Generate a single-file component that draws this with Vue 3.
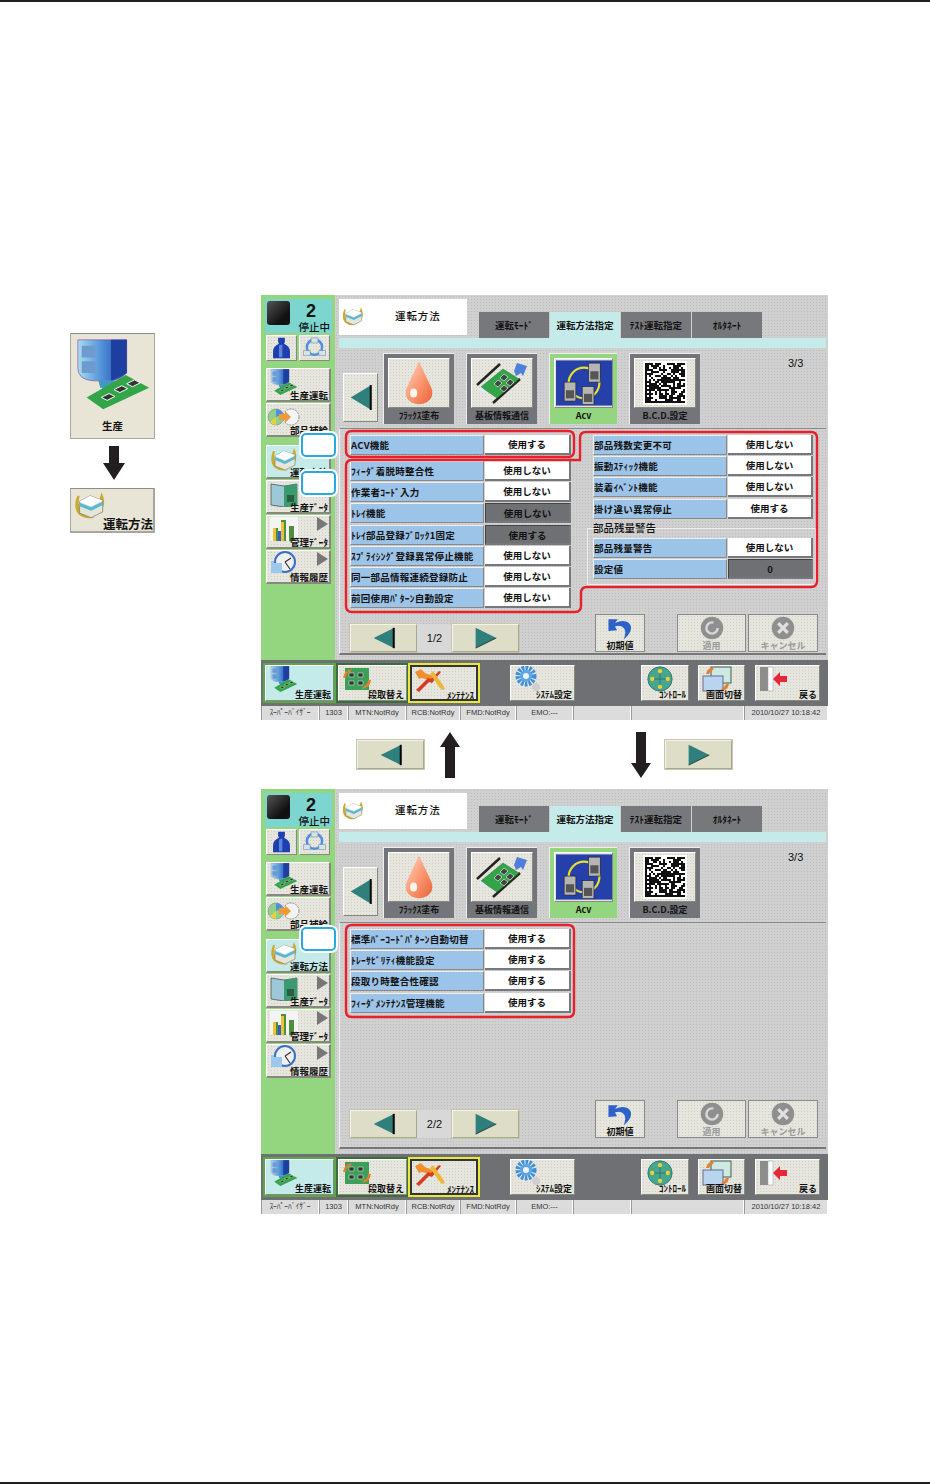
<template>
  <div class="page">
    <svg class="defs" width="0" height="0">
      <defs>
        <linearGradient id="gTower" x1="0" x2="1" y1="0" y2="0">
          <stop offset="0" stop-color="#a8def0" /><stop offset=".5" stop-color="#4f8fd8" /><stop offset="1" stop-color="#1c3fa0" />
        </linearGradient>
        <linearGradient id="gDrop" x1="0" x2="1" y1="0" y2="1">
          <stop offset="0" stop-color="#ffd8c4" /><stop offset=".5" stop-color="#fb9a74" /><stop offset="1" stop-color="#ea6238" />
        </linearGradient>
      </defs>
      <symbol id="machine" viewBox="0 0 84 72">
        <path d="M6 1h50v34q-6 6-14 8H22Q6 42 6 30z" fill="url(#gTower)" stroke="#8a3aa0" stroke-width=".6" />
        <path d="M10 7h14v12H10zM10 23h14v12H10z" fill="#6f9ad0" />
        <path d="M40 1h16v34l-16 8z" fill="#1c3fa0" />
        <path d="M27 43h18l-2 7h-3v8l-3 4h-3l-3-4v-8h-2z" fill="#3d9bc0" />
        <path d="M15 60L55 37l24 13-47 22z" fill="#32a548" />
        <path d="M30 60l8-4 6 3-8 4zM43 52l8-4 6 3-8 4zM56 46l8-4 6 3-8 4z" fill="#333" stroke="#fff" />
      </symbol>
      <symbol id="tray" viewBox="0 0 30 26">
        <path d="M4 5Q0 15 5 21q6 5 14 3-9-1-12-6T6 5zM25 2q4 8 1 14-2 3-6 5 4-7 3-12z" fill="#cfa92b" />
        <path d="M6 10l9-5 11 4v10l-10 5-10-4z" fill="#e6e6d8" stroke="#77776c" stroke-width=".6" />
        <path d="M6 10l9-5 11 4-10 5z" fill="#fff" />
        <path d="M6 11l10 4 10-5v3l-10 5-10-4z" fill="#58b7d5" />
      </symbol>
      <symbol id="person" viewBox="0 0 30 26">
        <path d="M11 1h8v5l-1 2q7 3 7 9v8H5v-8q0-6 7-9l-1-2z" fill="#1f3fb0" />
        <path d="M12 10l4-1v15h-4z" fill="#5a86da" />
      </symbol>
      <symbol id="ring" viewBox="0 0 30 26">
        <circle cx="15" cy="12" r="9" fill="none" stroke="#4f8fe0" stroke-width="3" />
        <path d="M11 1h8v6h-8zM2 16h8v6H2zM20 16h8v6h-8z" fill="#d5e3ec" stroke="#6c7f8c" stroke-width=".6" />
      </symbol>
      <symbol id="parts" viewBox="0 0 34 20">
        <circle cx="9" cy="10" r="8" fill="#8fd08a" stroke="#888" stroke-width=".6" />
        <path d="M9 2a8 8 0 0 1 7 5L9 10z" fill="#4f8fe0" />
        <path d="M9 10l-6 5a8 8 0 0 0 6 3z" fill="#e8d23a" />
        <circle cx="24" cy="10" r="8" fill="#f4f4f4" stroke="#777" stroke-width=".8" stroke-dasharray="2 1" />
        <path d="M12 7h6V4l6 6-6 6v-3h-6z" fill="#ef9a3a" />
      </symbol>
      <symbol id="board" viewBox="0 0 56 44">
        <path d="M3 24L26 3" stroke="#222" stroke-width="2.4" />
        <path d="M19 42l27-24" stroke="#222" stroke-width="2.4" />
        <path d="M7 26l22-18 16 10-22 19z" fill="#32a548" stroke="#1f6f30" stroke-width=".5" />
        <path d="M20 23l4-4 4 3-4 4zM26 17l4-4 4 3-4 4zM26 28l4-4 4 3-4 4zM32 22l4-4 4 3-4 4z" fill="#444" stroke="#fff" stroke-width=".6" />
        <path d="M40 10l3-8 10 3-4 10-2-3-5 3z" fill="#4f7fd8" />
        <path d="M7 26l-3 3 6 3 3-1z" fill="#dfe8f5" />
      </symbol>
      <symbol id="swap" viewBox="0 0 34 26">
        <rect x="5" y="2" width="24" height="22" fill="#3da058" />
        <path d="M9 7h5v4H9zM18 7h5v4h-5zM9 15h5v4H9zM18 15h5v4h-5z" fill="#333" stroke="#ddd" stroke-width=".6" />
        <path d="M3 12q1-8 9-9l-2 3q-4 1-4 6zM31 14q-1 8-9 9l2-3q4-1 4-6z" fill="#e57f2e" />
      </symbol>
      <symbol id="tools" viewBox="0 0 34 26">
        <path d="M2 5l6-3 4 4 10 4-3 4-10-3-3 1z" fill="#ef8f2e" />
        <path d="M3 23l3 2 10-10 3 1 9-11-2-1-8 8-3-1-10 10z" fill="#d83a26" />
        <path d="M20 4l10 14 2 4-3 1-3-3-9-13z" fill="#ebb93a" />
      </symbol>
      <symbol id="gear" viewBox="0 0 30 26">
        <circle cx="12" cy="10" r="8" fill="none" stroke="#3f8fdc" stroke-width="5" stroke-dasharray="2.5 1.2" />
        <circle cx="12" cy="10" r="6" fill="#5aa5e6" />
        <circle cx="12" cy="10" r="3" fill="#f3f3f3" />
        <circle cx="22" cy="21" r="4" fill="#cfcfcf" />
      </symbol>
      <symbol id="control" viewBox="0 0 30 30">
        <circle cx="15" cy="15" r="14" fill="#48a68e" stroke="#2b6f72" />
        <path d="M15 3v24M3 15h24" stroke="#2b6f72" />
        <circle cx="15" cy="6" r="2.5" fill="#e8d23a" /><circle cx="15" cy="24" r="2.5" fill="#e8d23a" />
        <circle cx="6" cy="15" r="2.5" fill="#e8d23a" /><circle cx="24" cy="15" r="2.5" fill="#e8d23a" />
      </symbol>
      <symbol id="screens" viewBox="0 0 30 26">
        <rect x="9" y="1" width="20" height="16" fill="#cfe8e2" stroke="#3b5f4f" />
        <rect x="1" y="10" width="20" height="15" fill="#b8d4ee" stroke="#5f6f8f" />
        <path d="M4 8q1-6 8-7l-1 3q-3 1-4 4zM27 18q-1 6-8 7l1-3q3-1 4-4z" fill="#e57f2e" />
      </symbol>
      <symbol id="door" viewBox="0 0 30 26">
        <path d="M1 1h8v24H1z" fill="#8d8d8d" />
        <path d="M9 1h5v24H9z" fill="#fff" stroke="#999" stroke-width=".5" />
        <path d="M14 13l7-7v4h7v6h-7v4z" fill="#e8263a" />
      </symbol>
      <symbol id="chart" viewBox="0 0 30 26">
        <path d="M1 1h28v24H1z" fill="#f4f4f4" />
        <path d="M4 25V12h5v13zM12 25V4h5v21zM20 25V10h5v15z" fill="#4f8f3a" />
        <path d="M4 25V12h3v13zM12 25V6h3v19z" fill="#e8c23a" />
        <path d="M9 25V15h3v10z" fill="#3b5fc0" />
      </symbol>
      <symbol id="clock" viewBox="0 0 30 26">
        <path d="M2 10h12v12H2z" fill="#9cc8ec" />
        <circle cx="16" cy="11" r="10" fill="#f0f0f0" stroke="#3a6fc8" stroke-width="2" />
        <path d="M2 12h11v10H2z" fill="#9cc8ec" />
        <path d="M16 11l6-4M16 11l5 7" stroke="#333" stroke-width="1.2" />
      </symbol>
      <symbol id="book" viewBox="0 0 30 26">
        <path d="M2 3l13 2 13-2v21l-13 2-13-2z" fill="#9cc8d8" stroke="#444" stroke-width=".7" />
        <path d="M15 5l13-2v21l-13 2z" fill="#3a9a70" />
        <path d="M18 14h7v7h-7z" fill="#2a5f40" />
      </symbol>
      <symbol id="drop" viewBox="0 0 40 50">
        <path d="M20 1Q9 24 6 31q-3 10 5 15 9 5 18 0 8-5 5-15Q31 24 20 1z" fill="url(#gDrop)" />
        <ellipse cx="14" cy="36" rx="4" ry="5" fill="#fff3ea" />
      </symbol>
      <symbol id="acvIcon" viewBox="0 0 62 50">
        <rect width="62" height="50" fill="#2540a8" />
        <circle cx="31" cy="25" r="17" fill="none" stroke="#e8e02a" stroke-width="2.4" />
        <g fill="#b5b5b5" stroke="#222" stroke-width=".7">
          <rect x="36" y="3" width="13" height="21" /><rect x="9" y="24" width="13" height="21" /><rect x="29" y="29" width="13" height="20" />
        </g>
        <g fill="#555"><rect x="38" y="12" width="9" height="9" /><rect x="11" y="33" width="9" height="9" /><rect x="31" y="37" width="9" height="9" /></g>
      </symbol>
      <symbol id="matrix" viewBox="0 0 44 44">
        <rect width="44" height="44" fill="#fff" />
        <rect v-for="c in matrixCells" :key="c.key" :x="c.x" :y="c.y" width="2" height="2" fill="#111" />
      </symbol>
      <symbol id="triL" viewBox="0 0 34 26" preserveAspectRatio="none">
        <path d="M33 1v24L1 13z" fill="#2f7f7c" />
        <path d="M32 1v24" stroke="#000" stroke-width="3" />
      </symbol>
      <symbol id="triR" viewBox="0 0 34 26" preserveAspectRatio="none">
        <path d="M1 1v24l32-12z" fill="#2f7f7c" />
        <path d="M1 25l32-12" stroke="#000" stroke-width=".8" />
      </symbol>
      <symbol id="undo" viewBox="0 0 36 32">
        <path d="M2 4l13 0-4 5q14-6 21 2 5 9-9 21 4-10 1-15-4-6-13-3l3 5L2 20z" fill="#2f62c8" />
      </symbol>
      <symbol id="okGray" viewBox="0 0 30 30">
        <circle cx="15" cy="15" r="14" fill="#8f8f8f" />
        <circle cx="15" cy="15" r="7" fill="none" stroke="#d8d8d8" stroke-width="3" stroke-dasharray="34 10" />
      </symbol>
      <symbol id="xGray" viewBox="0 0 30 30">
        <circle cx="15" cy="15" r="14" fill="#8f8f8f" />
        <path d="M9 9l12 12M21 9L9 21" stroke="#e0e0e0" stroke-width="4" />
      </symbol>
    </svg>

    <aside class="intro">
      <div class="intro-btn intro-btn--big">
        <svg class="intro-machine"><use href="#machine" /></svg>
        <span>生産</span>
      </div>
      <svg class="intro-arrow" viewBox="0 0 22 34"><path d="M6 0h10v17h6L11 34 0 17h6z" fill="#231f20" /></svg>
      <div class="intro-btn intro-btn--small">
        <svg class="intro-tray"><use href="#tray" /></svg>
        <span>運転方法</span>
      </div>
    </aside>

    <main class="screens">
      <template v-for="(screen, si) in screens" :key="screen.page">
        <section class="screen">
          <div class="screen__top">
            <nav class="rail">
              <div class="status-lamp">
                <div class="lamp"></div>
                <div class="lamp-text"><b>2</b><span>停止中</span></div>
              </div>
              <div class="mini-row">
                <div class="mini"><svg><use href="#person" /></svg></div>
                <div class="mini"><svg><use href="#ring" /></svg></div>
              </div>
              <div
                v-for="item in railItems"
                :key="item.label"
                :class="['rail-btn', { 'rail-btn--on': item.on, 'rail-btn--gap': item.gap }]"
              >
                <div class="rail-btn__head">
                  <svg><use :href="'#' + item.icon" /></svg>
                  <i v-if="item.more" class="more"></i>
                </div>
                <span>{{ item.label }}</span>
              </div>
            </nav>

            <div class="content">
              <div class="title-row">
                <div class="title">
                  <svg><use href="#tray" /></svg>
                  <span>運転方法</span>
                </div>
                <div class="tabs">
                  <div v-for="tab in tabs" :key="tab.label" :class="['tab', { 'tab--on': tab.on }]">{{ tab.label }}</div>
                </div>
              </div>
              <div class="strip"></div>

              <div class="icon-row">
                <div class="prev"><svg><use href="#triL" /></svg></div>
                <div
                  v-for="fn in functions"
                  :key="fn.label"
                  :class="['fn', { 'fn--on': fn.on }]"
                >
                  <div class="fn__face"><svg :class="'fn__' + fn.icon"><use :href="'#' + fn.icon" /></svg></div>
                  <span>{{ fn.label }}</span>
                </div>
                <div class="pager">3/3</div>
              </div>

              <div class="panel">
                <div class="columns">
                  <div v-for="(col, ci) in screen.columns" :key="ci" :class="['col', 'col--' + ci]">
                    <div
                      v-for="(group, gi) in col"
                      :key="gi"
                      :class="['group', { 'group--titled': group.title }]"
                    >
                      <div v-if="group.title" class="group__title">{{ group.title }}</div>
                      <div v-for="row in group.rows" :key="row.label" class="row">
                        <div class="row__label">{{ row.label }}</div>
                        <div :class="['row__value', { 'row__value--off': row.off }]">{{ row.value }}</div>
                      </div>
                    </div>
                  </div>
                </div>

                <div class="actions">
                  <div class="nav-btn"><svg><use href="#triL" /></svg></div>
                  <div class="page-no">{{ screen.page }}</div>
                  <div class="nav-btn"><svg><use href="#triR" /></svg></div>
                  <div class="act act--reset"><svg><use href="#undo" /></svg><span>初期値</span></div>
                  <div class="act act--off act--apply"><svg><use href="#okGray" /></svg><span>適用</span></div>
                  <div class="act act--off act--cancel"><svg><use href="#xGray" /></svg><span>キャンセル</span></div>
                </div>
              </div>
            </div>
          </div>

          <div class="bar">
            <div
              v-for="b in barItems"
              :key="b.label"
              :class="['bar-btn', b.cls]"
              :style="{ width: b.w + 'px', marginLeft: b.ml + 'px' }"
            >
              <svg><use :href="'#' + b.icon" /></svg>
              <span>{{ b.label }}</span>
            </div>
          </div>

          <div class="statusline">
            <div v-for="(c, i) in statusCells" :key="i" class="cell" :style="{ width: c.w + 'px' }">{{ c.text }}</div>
          </div>

          <!-- 赤枠と吹き出しは画面の上に重ねる -->
          <svg class="outline" viewBox="0 0 567 425">
            <path v-for="d in screen.outlines" :key="d" :d="d" fill="none" stroke="#e8202c" stroke-width="2.4" />
          </svg>
          <div v-for="top in screen.callouts" :key="top" class="callout" :style="{ top: top + 'px' }"></div>
        </section>

        <div v-if="si === 0" class="between">
          <div class="nav-btn nav-btn--loose"><svg><use href="#triL" /></svg></div>
          <svg class="big-arrow big-arrow--up" viewBox="0 0 20 46"><path d="M10 0l10 15h-5v31H5V15H0z" fill="#231f20" /></svg>
          <svg class="big-arrow big-arrow--down" viewBox="0 0 20 46"><path d="M5 0h10v31h5L10 46 0 31h5z" fill="#231f20" /></svg>
          <div class="nav-btn nav-btn--loose nav-btn--last"><svg><use href="#triR" /></svg></div>
        </div>
      </template>
    </main>
  </div>
</template>

<script setup>
const railItems = [
  { label: '生産運転', icon: 'machine' },
  { label: '部品補給', icon: 'parts' },
  { label: '運転方法', icon: 'tray', on: true, gap: true },
  { label: '生産ﾃﾞｰﾀ', icon: 'book', more: true },
  { label: '管理ﾃﾞｰﾀ', icon: 'chart', more: true },
  { label: '情報履歴', icon: 'clock', more: true },
];

const tabs = [
  { label: '運転ﾓｰﾄﾞ' },
  { label: '運転方法指定', on: true },
  { label: 'ﾃｽﾄ運転指定' },
  { label: 'ｵﾙﾀﾈｰﾄ' },
];

const functions = [
  { label: 'ﾌﾗｯｸｽ塗布', icon: 'drop' },
  { label: '基板情報通信', icon: 'board' },
  { label: 'Acv', icon: 'acvIcon', on: true },
  { label: 'B.C.D.設定', icon: 'matrix' },
];

const barItems = [
  { label: '生産運転', icon: 'machine', w: 69, ml: 0, cls: 'bar-btn--live' },
  { label: '段取替え', icon: 'swap', w: 69, ml: 4, cls: 'bar-btn--dark' },
  { label: 'ﾒﾝﾃﾅﾝｽ', icon: 'tools', w: 68, ml: 3, cls: 'bar-btn--warn' },
  { label: 'ｼｽﾃﾑ設定', icon: 'gear', w: 65, ml: 32 },
  { label: 'ｺﾝﾄﾛｰﾙ', icon: 'control', w: 48, ml: 66 },
  { label: '画面切替', icon: 'screens', w: 47, ml: 9 },
  { label: '戻る', icon: 'door', w: 65, ml: 10 },
];

const statusCells = [
  { text: 'ｽｰﾊﾟｰﾊﾞｲｻﾞｰ', w: 58 },
  { text: '1303', w: 29 },
  { text: 'MTN:NotRdy', w: 58 },
  { text: 'RCB:NotRdy', w: 54 },
  { text: 'FMD:NotRdy', w: 56 },
  { text: 'EMO:---', w: 57 },
  { text: '', w: 58 },
  { text: '', w: 113 },
  { text: '2010/10/27 10:18:42', w: 84 },
];

const useRow = (label, value = '使用しない', off = false) => ({ label, value, off });

const screens = [
  {
    page: '1/2',
    callouts: [138, 176],
    outlines: [
      'M91 136H307q6 0 6 6V156q0 6-6 6H91q-6 0-6-6V142q0-6 6-6Z',
      'M91 165H319V143q0-6 6-6H550q6 0 6 6V286q0 6-6 6H326q-6 0-6 6V311q0 6-6 6H91q-6 0-6-6V171q0-6 6-6Z',
    ],
    columns: [
      [
        { rows: [useRow('ACV機能', '使用する')] },
        {
          rows: [
            useRow('ﾌｨｰﾀﾞ着脱時整合性'),
            useRow('作業者ｺｰﾄﾞ入力'),
            useRow('ﾄﾚｲ機能', '使用しない', true),
            useRow('ﾄﾚｲ部品登録ﾌﾞﾛｯｸ1固定', '使用する', true),
            useRow('ｽﾌﾟﾗｲｼﾝｸﾞ登録異常停止機能'),
            useRow('同一部品情報連続登録防止'),
            useRow('前回使用ﾊﾟﾀｰﾝ自動設定'),
          ],
        },
      ],
      [
        {
          rows: [
            useRow('部品残数変更不可'),
            useRow('振動ｽﾃｨｯｸ機能'),
            useRow('装着ｲﾍﾞﾝﾄ機能'),
            useRow('掛け違い異常停止', '使用する'),
          ],
        },
        {
          title: '部品残量警告',
          rows: [useRow('部品残量警告'), useRow('設定値', '0', true)],
        },
      ],
    ],
  },
  {
    page: '2/2',
    callouts: [138],
    outlines: ['M91 136H307q6 0 6 6V222q0 6-6 6H91q-6 0-6-6V142q0-6 6-6Z'],
    columns: [
      [
        {
          rows: [
            useRow('標準ﾊﾞｰｺｰﾄﾞﾊﾟﾀｰﾝ自動切替', '使用する'),
            useRow('ﾄﾚｰｻﾋﾞﾘﾃｨ機能設定', '使用する'),
            useRow('段取り時整合性確認', '使用する'),
            useRow('ﾌｨｰﾀﾞﾒﾝﾃﾅﾝｽ管理機能', '使用する'),
          ],
        },
      ],
    ],
  },
];

// データマトリクス風のセル
const matrixCells = [];
let seed = 7;
for (let y = 0; y < 20; y++) {
  for (let x = 0; x < 20; x++) {
    seed = (seed * 73 + 41) % 1009;
    if (x === 0 || y === 19 || seed % 2 === 0 || seed % 5 === 0) {
      matrixCells.push({ key: x + '-' + y, x: 2 + x * 2, y: 2 + y * 2 });
    }
  }
}
</script>

<style>
html, body { margin: 0; background: #fff; }
</style>

<style scoped>
.page {
  box-sizing: border-box;
  width: 930px;
  height: 1484px;
  padding-top: 293px;
  border-top: 2px solid #231f20;
  border-bottom: 2px solid #231f20;
  display: flex;
  font-family: "Noto Sans CJK JP", "Noto Sans", sans-serif;
  font-weight: 700;
  color: #111;
  overflow: hidden;
}
.defs { position: absolute; }
.intro {
  width: 261px;
  padding: 38px 0 0 70px;
  box-sizing: border-box;
  display: flex;
  flex-direction: column;
}
.intro-btn {
  box-sizing: border-box;
  width: 85px;
  background: #e8e4d6;
  border: 1px solid #a9a79c;
  border-top-color: #8d8d88;
  position: relative;
}
.intro-btn--big {
  height: 106px;
  display: flex;
  flex-direction: column;
  align-items: center;
  font-size: 10.5px;
  line-height: 14px;
}
.intro-machine { width: 82px; height: 72px; margin: 4px 0 9px; }
.intro-arrow { width: 22px; height: 34px; margin: 7px 0 8px 33px; }
.intro-btn--small {
  height: 45px;
  border-right-width: 2px;
  border-bottom-width: 2px;
  font-size: 12.5px;
  text-align: right;
  line-height: 16px;
  padding-top: 27px;
  white-space: nowrap;
}
.intro-tray { position: absolute; left: 1px; top: 1px; width: 36px; height: 30px; }
.screens { width: 567px; }
.screen {
  position: relative;
  width: 567px;
  height: 425px;
  display: flex;
  flex-direction: column;
  font-size: 9.5px;
  background: #d2d2d2;
}
.screen__top { height: 365px; display: flex; }
.rail {
  width: 74px;
  background: #93d67f;
  padding: 4px 3px 0 4px;
  box-sizing: border-box;
  display: flex;
  flex-direction: column;
}
.status-lamp {
  height: 34px;
  background: #7dd5d0;
  display: flex;
}
.lamp {
  width: 23px;
  height: 24px;
  margin: 2px;
  border-radius: 3px;
  background: linear-gradient(135deg, #555, #111 70%);
}
.lamp-text {
  flex: 1;
  display: flex;
  flex-direction: column;
  align-items: flex-end;
  padding-right: 2px;
  line-height: 1;
}
.lamp-text b { font-size: 18px; margin: 3px 14px 2px 0; font-family: "Liberation Sans", sans-serif; }
.lamp-text span { font-size: 10.5px; font-weight: 500; }
.mini-row { display: flex; gap: 2px; margin: 2px 0 7px 1px; }
.mini,
.rail-btn,
.fn__face,
.act,
.bar-btn,
.prev,
.nav-btn {
  box-sizing: border-box;
  background-color: #e6e6de;
  background-image: radial-gradient(circle, #cfcfc6 .7px, transparent .8px);
  background-size: 3px 3px;
  border: 1px solid #88887f;
  border-top-color: #fff;
  border-left-color: #fff;
}
.mini { width: 31px; height: 26px; padding: 1px; }
.mini svg { width: 100%; height: 100%; display: block; }
.rail-btn {
  height: 34px;
  margin: 0 0 1px 1px;
  width: 65px;
  display: flex;
  flex-direction: column;
  justify-content: space-between;
  border-bottom-width: 2px;
  border-right-width: 2px;
  overflow: hidden;
  white-space: nowrap;
  text-align: right;
  font-size: 9.5px;
  line-height: 11px;
}
.rail-btn--gap { margin-top: 7px; }
.rail-btn--on { background: #c4eaea; }
.rail-btn__head { display: flex; justify-content: space-between; height: 21px; }
.rail-btn__head svg { width: 34px; height: 26px; flex: none; }
.rail-btn span { padding-right: 1px; position: relative; }
.more {
  width: 0;
  height: 0;
  border-left: 11px solid #777;
  border-top: 7px solid transparent;
  border-bottom: 7px solid transparent;
  margin: 1px 1px 0 0;
}
.content {
  flex: 1;
  padding: 4px 2px 0 4px;
  box-sizing: border-box;
  display: flex;
  flex-direction: column;
  background-color: #d0d0d0;
  background-image: radial-gradient(circle, #bdbdbd .7px, transparent .8px);
  background-size: 3px 3px;
}
.title-row { display: flex; height: 39px; align-items: flex-end; }
.title {
  width: 128px;
  height: 36px;
  background: #fff;
  margin-bottom: 3px;
  padding-bottom: 3px;
  box-sizing: border-box;
  display: flex;
  align-items: center;
  font-size: 10.5px;
  font-weight: 500;
  letter-spacing: .9px;
}
.title svg { width: 24px; height: 22px; margin: 0 30px 0 2px; }
.tabs { display: flex; margin-left: 12px; }
.tab {
  width: 70px;
  height: 26px;
  line-height: 26px;
  margin-right: 1px;
  background: #77787c;
  text-align: center;
  font-size: 9.5px;
  white-space: nowrap;
}
.tab--on { background: #c4eaea; }
.strip { height: 10px; background: #c4eaea; }
.icon-row { display: flex; height: 80px; padding: 5px 0 0 4px; box-sizing: border-box; position: relative; }
.prev {
  width: 35px;
  height: 49px;
  margin: 20px 5px 0 0;
  display: flex;
  align-items: center;
  justify-content: center;
}
.prev svg { width: 22px; height: 27px; }
.fn {
  box-sizing: border-box;
  width: 71px;
  height: 71px;
  background: #74757a;
  padding: 4px 4px 0;
  margin-right: 12px;
  text-align: center;
  font-size: 9px;
  line-height: 16px;
  border-top: 1px solid #eee;
  border-left: 1px solid #eee;
  white-space: nowrap;
}
.fn--on { background: #93d67f; width: 68px; }
.fn__face {
  height: 50px;
  display: flex;
  align-items: center;
  justify-content: center;
}
.fn__drop { width: 36px; height: 46px; }
.fn__board { width: 56px; height: 44px; }
.fn__acvIcon { width: 56px; height: 46px; }
.fn__matrix { width: 44px; height: 44px; }
.pager {
  position: absolute;
  left: 449px;
  top: 5px;
  font-family: "Liberation Sans", sans-serif;
  font-weight: 400;
  font-size: 11px;
  line-height: 20px;
}
.panel {
  height: 227px;
  box-sizing: border-box;
  border-top: 1px solid #888;
  border-left: 1px solid #eee;
  border-bottom: 2px solid #777;
  display: flex;
  flex-direction: column;
  padding: 6px 0 9px 10px;
}
.columns { display: flex; gap: 22px; }
.col { width: 221px; }
.col--1 { width: 220px; }
.group { display: flex; flex-direction: column; gap: 1.2px; margin-bottom: 6px; }
.col--1 .group { gap: 1.2px; margin-bottom: 0; }
.group--titled {
  border: 1px solid #eee;
  margin: 9px -3px 0 -6px;
  padding: 0 2px 5px 5px;
  position: relative;
}
.group__title {
  font-size: 10.5px;
  font-weight: 500;
  line-height: 12px;
  margin: -7px 0 0;
  height: 15px;
}
.row { display: flex; height: 20px; gap: 1px; }
.row__label {
  width: 134px;
  background: #9cc3e8;
  border: 1px solid #888;
  border-top-color: #eee;
  border-left-color: #eee;
  box-sizing: border-box;
  line-height: 18px;
  white-space: nowrap;
  overflow: hidden;
  letter-spacing: .25px;
}
.row__value {
  flex: 1;
  background: #fff;
  border-bottom: 2px solid #77787c;
  border-right: 2px solid #77787c;
  box-sizing: border-box;
  text-align: center;
  line-height: 18px;
}
.row__value--off { background: #6f7074; border-top: 1px solid #444; border-left: 1px solid #444; }
.actions {
  margin-top: auto;
  display: flex;
  align-items: flex-end;
}
.nav-btn {
  width: 67px;
  height: 28px;
  background-color: #ddddc8;
  background-image: none;
  border: 1px solid #a8a890;
  border-top-color: #f4f4ea;
  border-left-color: #f4f4ea;
  box-shadow: 0 0 0 1px #c6c6b0;
  display: flex;
  align-items: center;
  justify-content: center;
}
.nav-btn svg { width: 22px; height: 22px; }
.page-no {
  width: 35px;
  height: 28px;
  line-height: 28px;
  text-align: center;
  background: #d8d8d8;
  font-family: "Liberation Sans", sans-serif;
  font-weight: 400;
  font-size: 11px;
}
.act {
  height: 38px;
  border: 1px solid #8a8a8a;
  display: flex;
  flex-direction: column;
  align-items: center;
  font-size: 9px;
  line-height: 11px;
  white-space: nowrap;
}
.act svg { width: 26px; height: 25px; margin-top: 1px; }
.act--reset { width: 50px; margin-left: 76px; }
.act--apply { width: 69px; margin-left: 32px; }
.act--cancel { width: 70px; margin-left: 2px; }
.act--off { color: #9a9a9a; }
.bar {
  height: 46px;
  background: #6f7074;
  display: flex;
  align-items: center;
  padding-left: 4px;
}
.bar-btn {
  height: 36px;
  position: relative;
  font-size: 9px;
  line-height: 11px;
  text-align: right;
  white-space: nowrap;
  padding: 23px 2px 0 0;
}
.bar-btn svg { position: absolute; left: 1px; top: 0; width: 34px; height: 26px; }
.bar-btn span { position: relative; }
.bar-btn--live { background: #c4eaea; outline: 2px solid #5aa74a; }
.bar-btn--dark { outline: 2px solid #3c6e3a; }
.bar-btn--warn { outline: 2px solid #e8e83a; border: 2px solid #33343a; }
.statusline {
  height: 14px;
  background: #dcdcdc;
  display: flex;
  font-size: 7.5px;
  font-weight: 400;
  font-family: "Liberation Sans", "Noto Sans CJK JP", sans-serif;
  line-height: 13px;
  color: #333;
}
.cell {
  box-sizing: border-box;
  border-left: 1px solid #999;
  border-right: 1px solid #fff;
  text-align: center;
  white-space: nowrap;
  overflow: hidden;
}
.outline {
  position: absolute;
  left: 0;
  top: 0;
  width: 567px;
  height: 425px;
  pointer-events: none;
}
.callout {
  position: absolute;
  left: 40px;
  width: 35px;
  height: 24px;
  box-sizing: border-box;
  background: #fff;
  border: 2px solid #27a9e1;
  border-radius: 5px;
  box-shadow: 0 0 0 2px #fff;
}
.between {
  height: 69px;
  display: flex;
  align-items: flex-start;
}
.nav-btn--loose { margin: 20px 0 0 96px; width: 67px; height: 29px; flex: none; }
.big-arrow { width: 20px; height: 46px; margin-top: 12px; flex: none; }
.big-arrow--up { margin-left: 16px; }
.big-arrow--down { margin-left: 171px; }
.nav-btn--last { margin-left: 14px; }
</style>
